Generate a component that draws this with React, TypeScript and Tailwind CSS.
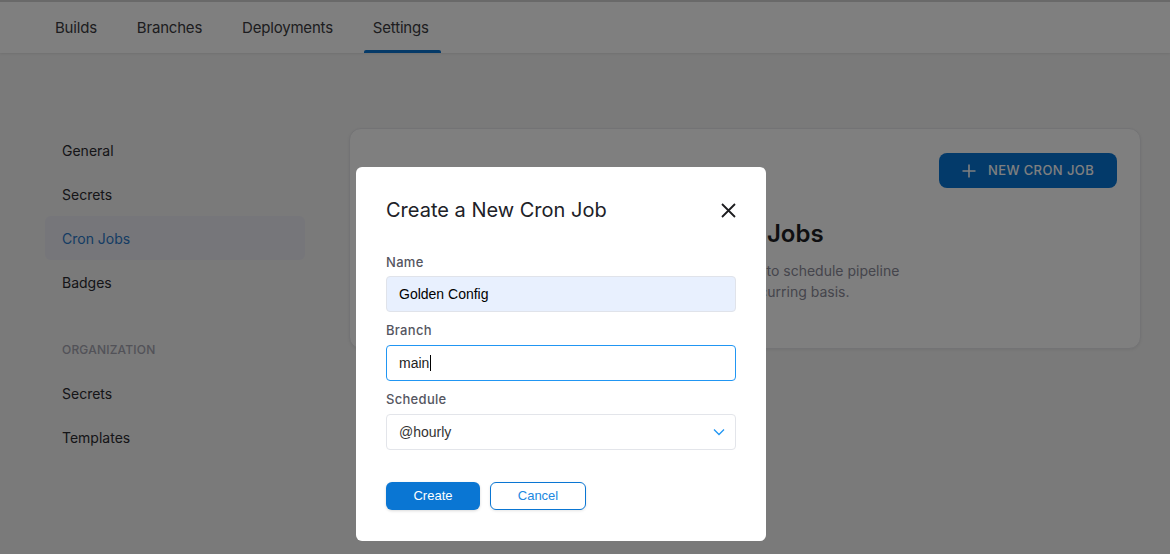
import React from "react";

const inter = { fontFamily: "Inter, 'Noto Sans', sans-serif" };

export default function App() {
  return (
    <div className="relative w-[1170px] h-[554px] overflow-hidden bg-[#f4f4f4]" style={inter}>
      {/* Header */}
      <div className="h-[53px] bg-white border-t-2 border-[#d2d2d2] shadow-[0_1px_2px_rgba(0,0,0,0.08)] flex items-end pl-[40px] gap-[10px]">
        {["Builds", "Branches", "Deployments", "Settings"].map((t) => (
          <div key={t} className="relative px-[15px] pt-[2px] h-full flex items-center text-[15px] tracking-[-0.2px] text-[#3a3a40]">
            {t}
            {t === "Settings" && (
              <div className="absolute left-[6px] right-[3px] bottom-0 h-[3px] rounded-t-[2px] bg-[#0b74d1]" />
            )}
          </div>
        ))}
      </div>

      {/* Body */}
      <div className="flex pt-[75px] pl-[45px]">
        {/* Sidebar */}
        <div className="w-[260px] flex flex-col text-[14px] text-[#2b2b30]">
          {["General", "Secrets", "Cron Jobs", "Badges"].map((t) => (
            <div
              key={t}
              className={`h-[44px] flex items-center px-[17px] rounded-[6px] ${t === "Cron Jobs" ? "bg-[#ececf4] text-[#2a78c8]" : ""}`}
            >
              {t}
            </div>
          ))}
          <div className="mt-[23px] h-[44px] flex items-center px-[17px] pt-[1px] text-[12px] font-medium text-[#a4a4b0] tracking-[0.2px]">
            ORGANIZATION
          </div>
          {["Secrets", "Templates"].map((t) => (
            <div key={t} className="h-[44px] flex items-center px-[17px]">
              {t}
            </div>
          ))}
        </div>

        {/* Card */}
        <div className="ml-[44px] w-[792px] h-[221px] bg-white rounded-[12px] border border-[#e6e6ea] shadow-[0_1px_3px_rgba(0,0,0,0.06)] px-[23px] pt-[24px]">
          <div className="flex justify-end">
            <div className="h-[35px] w-[178px] rounded-[8px] bg-[#0674d4] flex items-center justify-center gap-[12px] text-white text-[13px] font-medium tracking-[0.4px]">
              <svg width="14" height="14" viewBox="0 0 14 14" fill="none" stroke="currentColor" strokeWidth="1.6">
                <path d="M7 0.5v13M0.5 7h13" />
              </svg>
              NEW CRON JOB
            </div>
          </div>
          <div className="ml-[293px] mt-[30px]">
            <div className="text-[24px] font-semibold text-[#1f1f24] leading-[32px]">No Cron Jobs</div>
            <div className="mt-[10px] text-[14px] leading-[21px] text-[#8a8a98]">
              <div>Add a cron job to schedule pipeline</div>
              <div>events on a recurring basis.</div>
            </div>
          </div>
        </div>
      </div>

      {/* Overlay */}
      <div className="absolute inset-0 bg-black/50" />

      {/* Modal */}
      <div className="absolute left-[356px] top-[167px] w-[410px] h-[374px] bg-white rounded-[6px] px-[30px] pt-[31px]">
        <div className="flex items-center justify-between">
          <div className="text-[20px] text-[#202127] leading-[24px]">Create a New Cron Job</div>
          <svg width="15" height="15" viewBox="0 0 15 15" fill="none" stroke="#1c1c1f" strokeWidth="1.8">
            <path d="M1 1l13 13M14 1L1 14" />
          </svg>
        </div>

        <div className="mt-[32px] text-[13px] font-medium text-[#55565f] tracking-[0.3px] leading-[16px]">Name</div>
        <div
          className="mt-[6px] h-[36px] rounded-[4px] bg-[#e8f0fe] border border-[#e0e3ea] flex items-center px-[12px] text-[14px] text-black"
          style={{ fontFamily: "'Liberation Sans', Arial, sans-serif" }}
        >
          Golden Config
        </div>

        <div className="mt-[10px] text-[13px] font-medium text-[#55565f] tracking-[0.3px] leading-[16px]">Branch</div>
        <div
          className="mt-[7px] h-[36px] rounded-[4px] bg-white border border-[#2196f3] flex items-center px-[12px] text-[14px] text-[#222]"
          style={{ fontFamily: "'Liberation Sans', Arial, sans-serif" }}
        >
          main<span className="inline-block w-[1px] h-[16px] bg-black ml-[1px]" />
        </div>

        <div className="mt-[10px] text-[13px] font-medium text-[#55565f] tracking-[0.3px] leading-[16px]">Schedule</div>
        <div
          className="mt-[7px] h-[36px] rounded-[4px] bg-white border border-[#e3e5ea] flex items-center justify-between pl-[12px] pr-[10px] text-[14px] text-[#333]"
          style={{ fontFamily: "'Liberation Sans', Arial, sans-serif" }}
        >
          <span>@hourly</span>
          <svg width="12" height="8" viewBox="0 0 12 8" fill="none" stroke="#2196f3" strokeWidth="1.3">
            <path d="M1 1.5l5 5 5-5" />
          </svg>
        </div>

        <div className="mt-[32px] flex gap-[10px]" style={{ fontFamily: "'Liberation Sans', Arial, sans-serif" }}>
          <div className="w-[94px] h-[28px] rounded-[6px] bg-[#0a76d3] text-white text-[13px] flex items-center justify-center shadow-[0_1px_3px_rgba(0,0,0,0.15)]">
            Create
          </div>
          <div className="w-[96px] h-[28px] rounded-[6px] bg-white border border-[#0a76d3] text-[#2088e0] text-[13px] flex items-center justify-center shadow-[0_1px_3px_rgba(0,0,0,0.1)]">
            Cancel
          </div>
        </div>
      </div>
    </div>
  );
}
